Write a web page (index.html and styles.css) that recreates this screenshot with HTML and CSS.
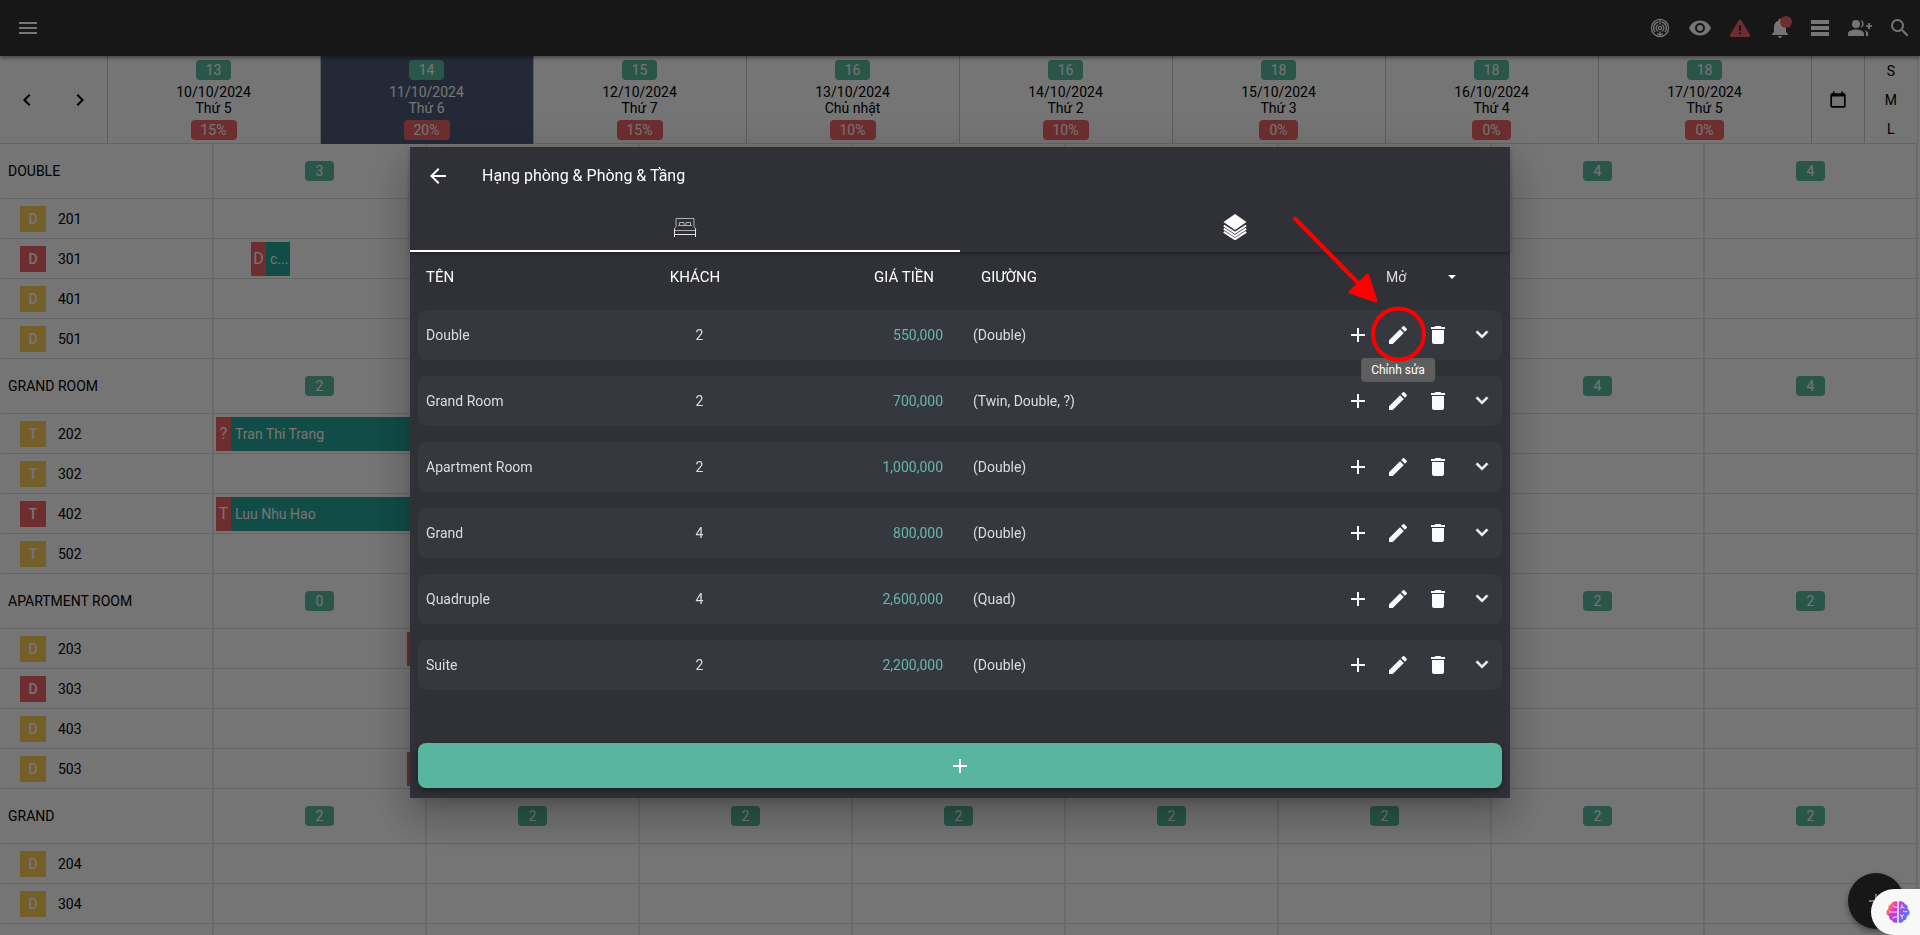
FILE: index.html
```html
<!DOCTYPE html>
<html lang="vi">
<head>
<meta charset="utf-8">
<meta name="viewport" content="width=device-width, initial-scale=1">
<title>Hạng phòng &amp; Phòng &amp; Tầng</title>
<link rel="stylesheet" href="styles.css">
</head>
<body>
<svg class="sprite" aria-hidden="true">
  <symbol id="i-plus" viewBox="0 0 24 24"><path d="M11 5h2v6h6v2h-6v6h-2v-6H5v-2h6z"/></symbol>
  <symbol id="i-edit" viewBox="0 0 24 24"><path d="M3 17.25V21h3.75L17.81 9.94l-3.75-3.75L3 17.25zM20.71 7.04a1 1 0 0 0 0-1.41l-2.34-2.34a1 1 0 0 0-1.41 0l-1.83 1.83 3.75 3.75 1.83-1.83z"/></symbol>
  <symbol id="i-trash" viewBox="0 0 24 24"><path d="M6 19c0 1.100.9 2 2 2h8c1.100 0 2-.9 2-2V7H6v12zM19 4h-3.500l-1-1h-5l-1 1H5v2h14V4z"/></symbol>
  <symbol id="i-down" viewBox="0 0 24 24"><path stroke="currentColor" stroke-width=".6" d="M7.410 7.840 12 12.420l4.590-4.580L18 9.250l-6 6-6-6z"/></symbol>
</svg>

<div class="app">
  <header class="topbar">
    <button class="icon-btn" aria-label="Menu"><svg viewBox="0 0 24 24"><path d="M3 18h18v-2H3v2zm0-5h18v-2H3v2zm0-7v2h18V6H3z"/></svg></button>
    <nav class="tools">
      <button class="icon-btn" aria-label="Radar"><svg viewBox="0 0 24 24" class="line"><circle cx="12" cy="12" r="8.600"/><path d="M10.500 5.900A6.300 6.300 0 0 0 7 16M13.500 5.900A6.300 6.300 0 0 1 17 16M9 17.700a6.300 6.300 0 0 0 6 0M12 3.500v5M12 15.500v5"/><path d="M10.200 8.500a4 4 0 0 0 0 7M13.800 8.500a4 4 0 0 1 0 7"/><circle cx="12" cy="12" r="1.600"/></svg></button>
      <button class="icon-btn" aria-label="Xem"><svg viewBox="0 0 24 24"><path d="M12 4.500C7 4.500 2.730 7.610 1 12c1.730 4.390 6 7.500 11 7.500s9.270-3.110 11-7.500c-1.730-4.390-6-7.500-11-7.500zM12 17a5 5 0 1 1 0-10 5 5 0 0 1 0 10zm0-8a3 3 0 1 0 0 6 3 3 0 0 0 0-6z"/></svg></button>
      <button class="icon-btn warn" aria-label="Cảnh báo"><svg viewBox="0 0 24 24"><path fill-rule="evenodd" d="M10.700 4.300a1.500 1.500 0 0 1 2.600 0l8.500 14.400a1.500 1.500 0 0 1-1.300 2.300h-17a1.500 1.500 0 0 1-1.300-2.300zM11 9.500v5.500h2V9.500zm0 7v2h2v-2z"/></svg></button>
      <button class="icon-btn" aria-label="Thông báo"><svg viewBox="0 0 24 24"><path d="M12 22a2 2 0 0 0 2-2h-4a2 2 0 0 0 2 2zm6-6v-5c0-3.070-1.640-5.640-4.500-6.320V4a1.500 1.500 0 0 0-3 0v.68C7.630 5.360 6 7.920 6 11v5l-2 2v1h16v-1z"/></svg><span class="dot"></span></button>
      <button class="icon-btn" aria-label="Danh sách"><svg viewBox="0 0 24 24"><path d="M3 4h18v4H3zM3 10h18v4H3zM3 16h18v4H3z"/></svg></button>
      <button class="icon-btn" aria-label="Thêm người"><svg viewBox="0 0 24 24"><circle cx="8" cy="8" r="4"/><path d="M0 20v-2.500C0 14.800 5.300 13.500 8 13.500s8 1.300 8 4V20zM12.500 4.100a4 4 0 0 1 0 7.800 6 6 0 0 0 0-7.800zM16.500 14c2 .8 3.700 2 3.700 3.700V20H18v-2.500c0-1.400-.6-2.600-1.500-3.500zM20.200 7h1.800v2.200h2v1.800h-2v2.200h-1.800V11h-2V9.200h2z"/></svg></button>
      <button class="icon-btn" aria-label="Tìm kiếm"><svg viewBox="0 0 24 24"><path d="M15.500 14h-.79l-.28-.27A6.470 6.470 0 0 0 16 9.500 6.500 6.500 0 1 0 9.500 16c1.610 0 3.090-.59 4.230-1.570l.27.28v.79l5 4.990L20.490 19zm-6 0a4.500 4.500 0 1 1 0-9 4.500 4.500 0 0 1 0 9z"/></svg></button>
    </nav>
  </header>

  <section class="days">
    <div class="pager">
      <button class="icon-btn" aria-label="Trước"><svg viewBox="0 0 24 24"><path d="M15.410 7.410 14 6l-6 6 6 6 1.410-1.410L10.830 12z"/></svg></button>
      <button class="icon-btn" aria-label="Sau"><svg viewBox="0 0 24 24"><path d="M10 6 8.590 7.410 13.170 12l-4.580 4.590L10 18l6-6z"/></svg></button>
    </div>
    <div class="day"><span class="badge">13</span><p class="date">10/10/2024<br>Thứ 5</p><span class="badge red">15%</span></div>
    <div class="day today"><span class="badge">14</span><p class="date">11/10/2024<br>Thứ 6</p><span class="badge red">20%</span></div>
    <div class="day"><span class="badge">15</span><p class="date">12/10/2024<br>Thứ 7</p><span class="badge red">15%</span></div>
    <div class="day"><span class="badge">16</span><p class="date">13/10/2024<br>Chủ nhật</p><span class="badge red">10%</span></div>
    <div class="day"><span class="badge">16</span><p class="date">14/10/2024<br>Thứ 2</p><span class="badge red">10%</span></div>
    <div class="day"><span class="badge">18</span><p class="date">15/10/2024<br>Thứ 3</p><span class="badge red">0%</span></div>
    <div class="day"><span class="badge">18</span><p class="date">16/10/2024<br>Thứ 4</p><span class="badge red">0%</span></div>
    <div class="day"><span class="badge">18</span><p class="date">17/10/2024<br>Thứ 5</p><span class="badge red">0%</span></div>
    <div class="picker"><button class="icon-btn" aria-label="Chọn ngày"><svg viewBox="0 0 24 24"><path d="M19 4h-1V2h-2v2H8V2H6v2H5a2 2 0 0 0-2 2v13a2 2 0 0 0 2 2h14a2 2 0 0 0 2-2V6a2 2 0 0 0-2-2zm0 15H5V8h14z" transform="translate(1.800 1.800) scale(.85)"/></svg></button></div>
    <div class="sizes"><button>S</button><button>M</button><button>L</button></div>
  </section>

  <table class="calendar">
    <tbody>
      <tr class="group"><th>DOUBLE</th><td><span class="badge">3</span></td><td></td><td></td><td></td><td></td><td></td><td><span class="badge">4</span></td><td><span class="badge">4</span></td></tr>
      <tr><th><span class="tag">D</span>201</th><td></td><td></td><td></td><td></td><td></td><td></td><td></td><td></td></tr>
      <tr><th><span class="tag red">D</span>301</th><td><div class="stay short"><b>D</b><span>c...</span></div></td><td></td><td></td><td></td><td></td><td></td><td></td><td></td></tr>
      <tr><th><span class="tag">D</span>401</th><td></td><td></td><td></td><td></td><td></td><td></td><td></td><td></td></tr>
      <tr><th><span class="tag">D</span>501</th><td></td><td></td><td></td><td></td><td></td><td></td><td></td><td></td></tr>
      <tr class="group"><th>GRAND ROOM</th><td><span class="badge">2</span></td><td></td><td></td><td></td><td></td><td></td><td><span class="badge">4</span></td><td><span class="badge">4</span></td></tr>
      <tr><th><span class="tag">T</span>202</th><td><div class="stay"><b>?</b><span>Tran Thi Trang</span></div></td><td></td><td></td><td></td><td></td><td></td><td></td><td></td></tr>
      <tr><th><span class="tag">T</span>302</th><td></td><td></td><td></td><td></td><td></td><td></td><td></td><td></td></tr>
      <tr><th><span class="tag red">T</span>402</th><td><div class="stay"><b>T</b><span>Luu Nhu Hao</span></div></td><td></td><td></td><td></td><td></td><td></td><td></td><td></td></tr>
      <tr><th><span class="tag">T</span>502</th><td></td><td></td><td></td><td></td><td></td><td></td><td></td><td></td></tr>
      <tr class="group"><th>APARTMENT ROOM</th><td><span class="badge">0</span></td><td></td><td></td><td></td><td></td><td></td><td><span class="badge">2</span></td><td><span class="badge">2</span></td></tr>
      <tr><th><span class="tag">D</span>203</th><td><div class="stay late"><b></b><span></span></div></td><td></td><td></td><td></td><td></td><td></td><td></td><td></td></tr>
      <tr><th><span class="tag red">D</span>303</th><td></td><td></td><td></td><td></td><td></td><td></td><td></td><td></td></tr>
      <tr><th><span class="tag">D</span>403</th><td></td><td></td><td></td><td></td><td></td><td></td><td></td><td></td></tr>
      <tr><th><span class="tag">D</span>503</th><td><div class="stay late"><b></b><span></span></div></td><td></td><td></td><td></td><td></td><td></td><td></td><td></td></tr>
      <tr class="group"><th>GRAND</th><td><span class="badge">2</span></td><td><span class="badge">2</span></td><td><span class="badge">2</span></td><td><span class="badge">2</span></td><td><span class="badge">2</span></td><td><span class="badge">2</span></td><td><span class="badge">2</span></td><td><span class="badge">2</span></td></tr>
      <tr><th><span class="tag">D</span>204</th><td></td><td></td><td></td><td></td><td></td><td></td><td></td><td></td></tr>
      <tr><th><span class="tag">D</span>304</th><td></td><td></td><td></td><td></td><td></td><td></td><td></td><td></td></tr>
      <tr><th></th><td></td><td></td><td></td><td></td><td></td><td></td><td></td><td></td></tr>
    </tbody>
  </table>
  <button class="fab" aria-label="Thêm"><svg><use href="#i-plus"/></svg></button>
</div>

<div class="backdrop">
  <div class="dialog" role="dialog" aria-labelledby="dialog-title">
    <div class="dialog-head">
      <div class="dialog-bar">
        <button class="icon-btn" aria-label="Quay lại"><svg viewBox="0 0 24 24"><path d="M20 11H7.830l5.590-5.590L12 4l-8 8 8 8 1.410-1.410L7.830 13H20z"/></svg></button>
        <h1 id="dialog-title">Hạng phòng &amp; Phòng &amp; Tầng</h1>
      </div>
      <div class="tabs" role="tablist">
        <button class="tab active" role="tab" aria-label="Hạng phòng"><svg class="bed" viewBox="0 0 24 20"><path class="thin" d="M3 9.500V1.500h18v8M6.500 8V5.500h4.500V8M13 8V5.500h4.500V8M5 8.500h14"/><path class="thin" d="M3 9.500 1 12.500M21 9.500l2 3M1.500 13.500h21"/><path class="bold" d="M1.500 17.500h21M1.500 12v8M22.500 12v8"/></svg></button>
        <button class="tab" role="tab" aria-label="Tầng"><svg class="layers" viewBox="0 0 24 26"><path d="M12 0 23.500 8 12 16 .5 8z"/><path class="edge" d="M.8 11.500 12 18.800l11.200-7.300M.8 14.700 12 22l11.200-7.300M.8 17.900 12 25.200l11.200-7.300"/></svg></button>
      </div>
    </div>

    <table class="rooms">
      <thead>
        <tr><th>TÊN</th><th class="guests">KHÁCH</th><th class="price">GIÁ TIỀN</th><th class="beds">GIƯỜNG</th>
          <th class="filter"><select aria-label="Trạng thái"><option>Mở</option></select><svg viewBox="0 0 8 4"><path d="M0 0h8L4 4z"/></svg></th></tr>
      </thead>
      <tbody>
        <tr><td>Double</td><td class="guests">2</td><td class="price">550,000</td><td class="beds">(Double)</td><td class="actions"><button aria-label="Thêm"><svg><use href="#i-plus"/></svg></button><button aria-describedby="tip" aria-label="Chỉnh sửa"><svg><use href="#i-edit"/></svg><span class="tip" id="tip" role="tooltip">Chỉnh sửa</span></button><button aria-label="Xóa"><svg><use href="#i-trash"/></svg></button><button class="expand" aria-label="Mở rộng"><svg><use href="#i-down"/></svg></button></td></tr>
        <tr><td>Grand Room</td><td class="guests">2</td><td class="price">700,000</td><td class="beds">(Twin, Double, ?)</td><td class="actions"><button aria-label="Thêm"><svg><use href="#i-plus"/></svg></button><button aria-label="Chỉnh sửa"><svg><use href="#i-edit"/></svg></button><button aria-label="Xóa"><svg><use href="#i-trash"/></svg></button><button class="expand" aria-label="Mở rộng"><svg><use href="#i-down"/></svg></button></td></tr>
        <tr><td>Apartment Room</td><td class="guests">2</td><td class="price">1,000,000</td><td class="beds">(Double)</td><td class="actions"><button aria-label="Thêm"><svg><use href="#i-plus"/></svg></button><button aria-label="Chỉnh sửa"><svg><use href="#i-edit"/></svg></button><button aria-label="Xóa"><svg><use href="#i-trash"/></svg></button><button class="expand" aria-label="Mở rộng"><svg><use href="#i-down"/></svg></button></td></tr>
        <tr><td>Grand</td><td class="guests">4</td><td class="price">800,000</td><td class="beds">(Double)</td><td class="actions"><button aria-label="Thêm"><svg><use href="#i-plus"/></svg></button><button aria-label="Chỉnh sửa"><svg><use href="#i-edit"/></svg></button><button aria-label="Xóa"><svg><use href="#i-trash"/></svg></button><button class="expand" aria-label="Mở rộng"><svg><use href="#i-down"/></svg></button></td></tr>
        <tr><td>Quadruple</td><td class="guests">4</td><td class="price">2,600,000</td><td class="beds">(Quad)</td><td class="actions"><button aria-label="Thêm"><svg><use href="#i-plus"/></svg></button><button aria-label="Chỉnh sửa"><svg><use href="#i-edit"/></svg></button><button aria-label="Xóa"><svg><use href="#i-trash"/></svg></button><button class="expand" aria-label="Mở rộng"><svg><use href="#i-down"/></svg></button></td></tr>
        <tr><td>Suite</td><td class="guests">2</td><td class="price">2,200,000</td><td class="beds">(Double)</td><td class="actions"><button aria-label="Thêm"><svg><use href="#i-plus"/></svg></button><button aria-label="Chỉnh sửa"><svg><use href="#i-edit"/></svg></button><button aria-label="Xóa"><svg><use href="#i-trash"/></svg></button><button class="expand" aria-label="Mở rộng"><svg><use href="#i-down"/></svg></button></td></tr>
      </tbody>
    </table>

    <button class="add" aria-label="Thêm hạng phòng"><svg><use href="#i-plus"/></svg></button>

    <svg class="pointer" viewBox="0 0 140 152" aria-hidden="true"><path d="M5 6.500 69 72" fill="none" stroke-width="4" stroke-linecap="round"/><path d="M77.500 63 86 89 60 80z" stroke-width="3" stroke-linejoin="round"/><circle cx="108.500" cy="122" r="25.500" fill="none" stroke-width="4"/></svg>
  </div>
</div>

<button class="assistant" aria-label="Trợ lý">
  <svg viewBox="0 0 24 24">
    <defs>
      <linearGradient id="g-left" x1="0" y1="0" x2="1" y2="1"><stop offset="0" stop-color="#ffa02e"/><stop offset=".3" stop-color="#ff6a5c"/><stop offset=".55" stop-color="#e030d8"/><stop offset="1" stop-color="#6a5cf5"/></linearGradient>
      <linearGradient id="g-right" x1="0" y1="0" x2="1" y2="1"><stop offset="0" stop-color="#d43fe0"/><stop offset=".5" stop-color="#7b5cf0"/><stop offset="1" stop-color="#2fa0ff"/></linearGradient>
    </defs>
    <path fill="url(#g-left)" d="M11.300 1.500v21c-2.500.8-4.500-.2-5-2-2.200-.2-3.400-2-3-4C.8 15.500 0 13.500.5 11.800c.2-1.500 1-2.500 2-3C1.800 6.500 3 4.600 5 4.300 5.800 1.800 9 .5 11.300 1.500z"/>
    <path fill="url(#g-right)" d="M12.700 1.500v21c2.500.8 4.500-.2 5-2 2.200-.2 3.400-2 3-4 2.500-1 3.300-3 2.800-4.700-.2-1.500-1-2.500-2-3 .7-2.300-.5-4.200-2.500-4.500-.8-2.500-4-3.800-6.300-2.800z"/>
    <path class="folds" d="M3 12h8M11 7H8L7 5.500M11 17H8l-1.500 1.500M16 4.500V7l-2 1.500M16 7l2.500 1M16 19v-3l-2-1M16 16l2-1.500M21.500 11l-2.500 1-2-1"/>
  </svg>
</button>
</body>
</html>
```
FILE: styles.css
```css
* { box-sizing: border-box; }

body {
  margin: 0;
  height: 100vh;
  overflow: hidden;
  background: #fff;
  color: #000;
  font: 400 14px/16px Roboto, "Noto Sans", sans-serif;
}

button {
  margin: 0;
  padding: 0;
  border: 0;
  background: none;
  color: inherit;
  font: inherit;
  cursor: pointer;
}

svg { width: 24px; height: 24px; fill: currentColor; display: block; }
.sprite { display: none; }

.app { height: 100vh; overflow: hidden; }

.icon-btn {
  position: relative;
  display: flex;
  align-items: center;
  justify-content: center;
  width: 40px;
  height: 40px;
}

/* Top bar */
.topbar {
  position: relative;
  z-index: 1;
  display: flex;
  align-items: center;
  justify-content: space-between;
  height: 56px;
  padding: 0 0 0 8px;
  background: #323236;
  color: #fff;
  box-shadow: 0 2px 4px rgba(0, 0, 0, .4);
}
.tools { display: flex; }
.warn { color: #f06468; }
.line { fill: none; stroke: currentColor; stroke-width: 1.3; }
.dot {
  position: absolute;
  top: 8px;
  right: 8px;
  width: 12px;
  height: 12px;
  border-radius: 50%;
  background: #f06468;
}

/* Day header */
.days {
  display: grid;
  grid-template-columns: 2fr repeat(8, 4fr) 1fr 1fr;
  height: 88px;
  margin: 0 2px 0 1px;
  border-bottom: 1px solid #dcdcdc;
}
.days > div { min-width: 0; border-right: 1px solid #c8c8c8; }
.days > .sizes { border-right-color: #e4e4e4; }
.pager, .picker { display: flex; align-items: center; justify-content: space-around; }
.day {
  display: flex;
  flex-direction: column;
  align-items: center;
  gap: 4px;
  padding-top: 4px;
  text-align: center;
}
.today { margin-bottom: -1px; background: #4d5b77; color: #fff; }
.date { margin: 0; }
.sizes { display: grid; }

.badge {
  display: inline-block;
  height: 20px;
  padding: 0 10px;
  border-radius: 4px;
  background: #59bba0;
  color: #fff;
  line-height: 20px;
}
.badge.red, .tag.red { background: #f06468; }

/* Room calendar */
.calendar {
  width: calc(100% - 3px);
  margin-left: 1px;
  table-layout: fixed;
  border-collapse: separate;
  border-spacing: 0;
}
.calendar th, .calendar td {
  position: relative;
  height: 40px;
  padding: 0;
  border-right: 2px solid #e8e8e8;
  border-bottom: 1px solid #dedede;
  text-align: center;
}
.calendar th { padding-left: 19px; font-weight: 400; text-align: left; }
.calendar .group th, .calendar .group td { height: 55px; }
.calendar .group th { padding-left: 7px; }
.calendar .badge { padding: 0 11px; }
.tag {
  display: inline-block;
  width: 26px;
  height: 26px;
  margin-right: 12px;
  background: #ffd05b;
  color: #fff;
  font-weight: 500;
  line-height: 26px;
  text-align: center;
}
.stay {
  position: absolute;
  z-index: 1;
  top: 3px;
  left: 2px;
  display: flex;
  width: 100%;
  height: 34px;
  background: #26a69a;
  color: #fff;
  line-height: 34px;
}
.stay b { flex: 0 0 15px; background: #f06468; font-size: 16px; font-weight: 400; text-align: center; }
.stay span { padding-left: 4px; }
.stay.short { left: 37px; width: 39px; }
.stay.late { left: 193px; }

.fab {
  position: fixed;
  right: 16px;
  bottom: 6px;
  z-index: 2;
  display: grid;
  place-items: center;
  width: 56px;
  height: 56px;
  border-radius: 50%;
  background: #323236;
  color: #fff;
  box-shadow: 0 3px 6px rgba(0, 0, 0, .4);
}

/* Dialog */
.backdrop {
  position: fixed;
  inset: 0;
  z-index: 3;
  display: flex;
  align-items: flex-start;
  justify-content: center;
  padding-top: 147px;
  background: rgba(0, 0, 0, .54);
}
.dialog {
  position: relative;
  width: 1100px;
  max-width: 100%;
  background: #303136;
  color: #fff;
  box-shadow: 0 11px 15px -7px rgba(0, 0, 0, .2), 0 24px 38px 3px rgba(0, 0, 0, .14), 0 9px 46px 8px rgba(0, 0, 0, .12);
}
.dialog-head { box-shadow: 0 2px 4px rgba(0, 0, 0, .3); }
.dialog-bar { display: flex; align-items: center; gap: 24px; height: 57px; padding-left: 8px; }
.dialog-bar h1 { margin: 0; font-size: 16px; font-weight: 400; line-height: 24px; }
.tabs { display: grid; grid-template-columns: 1fr 1fr; }
.tab { display: grid; place-items: center; height: 48px; border-bottom: 2px solid transparent; }
.tab.active { border-bottom-color: #fff; }
.bed { height: 20px; fill: none; stroke: #fff; }
.thin { stroke: #b0b0b2; }
.bold { stroke: #e8e8e8; }
.layers { height: 26px; }
.edge { fill: none; stroke: currentColor; stroke-width: 2; }

.rooms { display: block; padding: 0 8px; }
.rooms thead { display: block; }
.rooms tbody { display: grid; gap: 16px; padding-top: 8px; }
.rooms tr {
  display: grid;
  grid-template-columns: 220fr 107fr 190fr 395fr 164px;
  align-items: center;
  height: 50px;
  padding-left: 8px;
}
.rooms tbody tr { border-radius: 8px; background: #363840; }
.rooms th, .rooms td { padding: 0; text-align: left; }
.rooms th { font-size: 15px; font-weight: 400; }
.rooms td { color: #dcdcde; }
.rooms .guests { text-align: center; }
.rooms .price { text-align: right; }
.rooms .beds { padding-left: 30px; }
.rooms td.price { color: #66b8a6; }
.rooms th.guests, .rooms th.price { padding-right: 9px; }
.rooms th.beds { padding-left: 38px; }
.rooms .filter { display: flex; align-items: center; padding-left: 48px; }
.filter select {
  width: 62px;
  padding: 0;
  border: 0;
  appearance: none;
  background: transparent;
  color: #dcdcde;
  font: inherit;
  font-size: 14px;
}
.filter option { color: #000; }
.filter svg { width: 8px; height: 4px; }
.rooms .actions { display: flex; color: #fafcff; }
.actions button { position: relative; display: grid; place-items: center; width: 40px; height: 40px; }
.actions .expand { margin-left: 4px; }
.tip {
  position: absolute;
  z-index: 1;
  top: 43px;
  left: 50%;
  transform: translateX(-50%);
  padding: 4px 10px;
  border-radius: 4px;
  background: #5e5e5f;
  color: #fff;
  font-size: 12px;
  font-weight: 400;
  white-space: nowrap;
}

.add {
  display: grid;
  place-items: center;
  width: calc(100% - 16px);
  height: 45px;
  margin: 53px 8px 10px;
  border-radius: 8px;
  background: #5ab5a0;
  box-shadow: 0 3px 6px rgba(0, 0, 0, .4);
}
.pointer {
  position: absolute;
  top: 65px;
  right: 80px;
  z-index: 2;
  width: 140px;
  height: 152px;
  fill: #f00;
  stroke: #f00;
  pointer-events: none;
}

/* Assistant launcher */
.assistant {
  position: fixed;
  right: 0;
  bottom: 0;
  z-index: 4;
  display: grid;
  place-items: center start;
  width: 49px;
  height: 46px;
  padding-left: 15px;
  border-radius: 23px 0 0 23px;
  background: #f8f8f8;
}
.folds { fill: none; stroke: #f8e8ff; stroke-width: 1; }
```
